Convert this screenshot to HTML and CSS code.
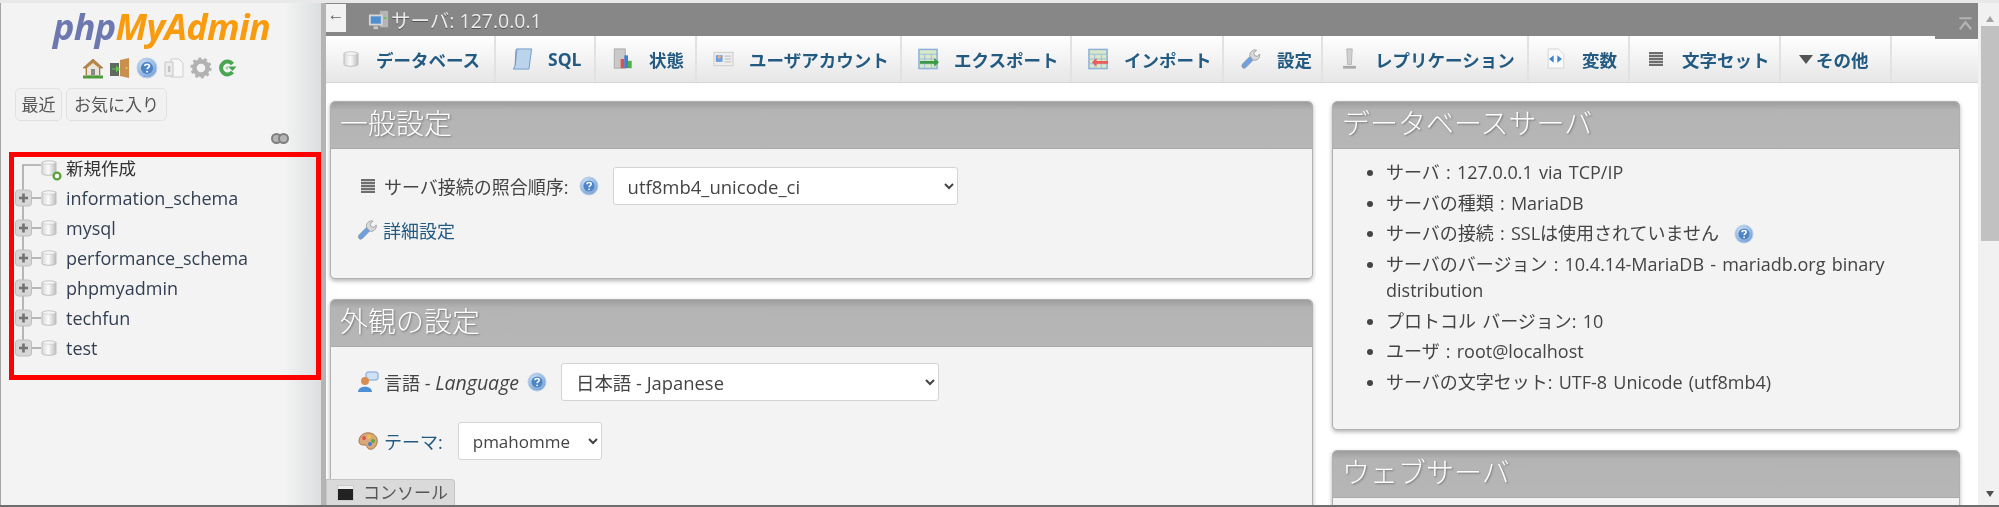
FILE: index.html
```html
<!DOCTYPE html>
<html lang="ja">
<head>
<meta charset="utf-8">
<title>phpMyAdmin</title>
<link rel="stylesheet" href="styles.css">
</head>
<body>
<svg class="defs" width="0" height="0" aria-hidden="true">
  <defs>
    <linearGradient id="dbg" x1="0" x2="1" y1="0" y2="0"><stop offset="0" stop-color="#d8d8d8"/><stop offset=".45" stop-color="#fbfbfb"/><stop offset="1" stop-color="#bdbdbd"/></linearGradient>
    <radialGradient id="hg" cx=".4" cy=".35" r=".75"><stop offset="0" stop-color="#dbe8f7"/><stop offset=".6" stop-color="#97b9e2"/><stop offset="1" stop-color="#6b97cf"/></radialGradient>
    <symbol id="db" viewBox="0 0 16 18"><path d="M1 3.5C1 1.6 15 1.6 15 3.5V14.5C15 16.8 1 16.8 1 14.5Z" fill="url(#dbg)" stroke="#bdbdbd"/><ellipse cx="8" cy="3.6" rx="6.4" ry="1.7" fill="#f4f4f4" stroke="#c8c8c8" stroke-width=".6"/></symbol>
    <symbol id="help" viewBox="0 0 20 20"><circle cx="10" cy="10" r="9" fill="url(#hg)" stroke="#b7cde8"/><circle cx="10" cy="10" r="5.6" fill="#4d84c6"/><path d="M8 8.2C8 6 12.2 6 12.2 8.2C12.2 9.6 10.1 9.6 10.1 11.2" fill="none" stroke="#fff" stroke-width="1.5"/><circle cx="10.1" cy="13.3" r=".9" fill="#fff"/></symbol>
    <symbol id="wrench" viewBox="0 0 22 24"><path d="M2.5 21.5C.8 19.8 1.5 18 3 16.5L10.5 9C9.8 5 13 1.5 17.5 2.3L14.5 5.5L15.5 8.5L18.5 9.2L21 6.5C21.6 11 18 14 14 13.2L6.3 21C5 22.4 3.6 22.6 2.5 21.5Z" fill="#6f9fdc" stroke="#8f8f8f" stroke-width=".6"/><path d="M10.5 9C9.8 5 13 1.5 17.5 2.3L14.5 5.5L15.5 8.5L18.5 9.2L21 6.5C21.6 11 18 14 14 13.2Z" fill="#d9d9d9" stroke="#a0a0a0" stroke-width=".7"/></symbol>
    <symbol id="lines" viewBox="0 0 16 16"><rect x="1" y="1" width="14" height="14" fill="#6e6e6e"/><path d="M1 3.5H15M1 6.5H15M1 9.5H15M1 12.5H15" stroke="#cfcfcf"/></symbol>
    <symbol id="node" viewBox="0 0 44 30"><path d="M8 0V30" stroke="#a6a6a6" stroke-width="1.6"/><path d="M16 15H26" stroke="#a6a6a6" stroke-width="1.6"/><rect x=".5" y="7" width="16" height="16" rx="3" fill="#d6d6d6" stroke="#bebebe"/><path d="M4 15H13M8.5 10.5V19.5" stroke="#727272" stroke-width="2.6"/></symbol>
    <symbol id="nodeend" viewBox="0 0 44 30"><path d="M8 0V15" stroke="#a6a6a6" stroke-width="1.6"/><path d="M16 15H26" stroke="#a6a6a6" stroke-width="1.6"/><rect x=".5" y="7" width="16" height="16" rx="3" fill="#d6d6d6" stroke="#bebebe"/><path d="M4 15H13M8.5 10.5V19.5" stroke="#727272" stroke-width="2.6"/></symbol>
  </defs>
</svg>

<div class="app">
  <aside class="nav">
    <div class="logo"><span class="logo-php">php</span><span class="logo-my">MyAdmin</span></div>
    <div class="quick">
      <svg class="qi" viewBox="0 0 22 22"><path d="M11 2L1 11H4V18H18V11H21Z" fill="#b98645" stroke="#8e6530" stroke-width=".6"/><path d="M5 11L11 6L17 11V18H5Z" fill="#e9e4da"/><rect x="9" y="12" width="4" height="6" fill="#8a8a8a"/><path d="M1 20H21" stroke="#4f9a3c" stroke-width="3"/></svg>
      <svg class="qi" viewBox="0 0 22 22"><rect x="1" y="6" width="9" height="13" fill="#5e6a60"/><path d="M11 3L20 1V21L11 19Z" fill="#c98f4e"/><path d="M2 12H6V9L10 12.5L6 16V13H2Z" fill="#63c14b" transform="translate(1 -.5)"/><circle cx="17.5" cy="11" r="1" fill="#f0d060"/></svg>
      <svg class="qi" viewBox="0 0 20 20"><use href="#help"/></svg>
      <svg class="qi" viewBox="0 0 22 22"><path d="M8 2H16L20 6V20H8Z" fill="#f7f7f7" stroke="#cfcfcf"/><path d="M2 5H10V19H2Z" fill="#ececec" stroke="#c6c6c6"/><rect x="5" y="9" width="2.4" height="6" fill="#c4c4c4"/></svg>
      <svg class="qi" viewBox="0 0 22 22"><circle cx="11" cy="11" r="6.6" fill="none" stroke="#b2b2b2" stroke-width="4.6"/><circle cx="11" cy="11" r="9.4" fill="none" stroke="#b2b2b2" stroke-width="2.4" stroke-dasharray="3 2.9"/></svg>
      <svg class="qi" viewBox="0 0 22 22"><path d="M15.5 7A6.4 6.4 0 1 0 15.5 15" fill="none" stroke="#4aa552" stroke-width="4"/><path d="M11 9.5H19.5L15.5 14Z" fill="#4aa552"/><circle cx="10" cy="11" r="1.4" fill="#9bd0a0"/></svg>
    </div>
    <div class="recent">
      <span class="pill pill-a">最近</span>
      <span class="pill pill-b">お気に入り</span>
    </div>
    <div class="linkrow">
      <svg class="link" viewBox="0 0 18 11"><rect x="1" y="1" width="9" height="9" rx="4.5" fill="#b5b5b5" stroke="#808080" stroke-width="2"/><rect x="8" y="1" width="9" height="9" rx="4.5" fill="#b5b5b5" stroke="#808080" stroke-width="2"/></svg>
    </div>
    <div class="tree">
      <div class="row row-first">
        <svg class="branch" viewBox="0 0 44 30"><path d="M8 30V12H26" fill="none" stroke="#a6a6a6" stroke-width="1.6"/></svg>
        <span class="dbwrap"><svg class="dbi"><use href="#db"/></svg><svg class="newdot" viewBox="0 0 10 10"><circle cx="5" cy="5" r="3.4" fill="#fff" stroke="#5fa23f" stroke-width="2.4"/></svg></span>
        <span class="tname tnew">新規作成</span>
      </div>
      <div class="row"><svg class="branch"><use href="#node"/></svg><svg class="dbi"><use href="#db"/></svg><span class="tname">information_schema</span></div>
      <div class="row"><svg class="branch"><use href="#node"/></svg><svg class="dbi"><use href="#db"/></svg><span class="tname">mysql</span></div>
      <div class="row"><svg class="branch"><use href="#node"/></svg><svg class="dbi"><use href="#db"/></svg><span class="tname">performance_schema</span></div>
      <div class="row"><svg class="branch"><use href="#node"/></svg><svg class="dbi"><use href="#db"/></svg><span class="tname">phpmyadmin</span></div>
      <div class="row"><svg class="branch"><use href="#node"/></svg><svg class="dbi"><use href="#db"/></svg><span class="tname">techfun</span></div>
      <div class="row"><svg class="branch"><use href="#nodeend"/></svg><svg class="dbi"><use href="#db"/></svg><span class="tname">test</span></div>
    </div>
  </aside>

  <div class="resizer"></div>

  <main class="main">
    <header class="topbar">
      <span class="back">←</span>
      <svg class="srv" viewBox="0 0 24 24"><rect x="13" y="2" width="9" height="18" fill="#b5b5b5"/><rect x="1" y="6" width="15" height="12" fill="#d6d6d6"/><rect x="3" y="8" width="11" height="8" fill="#4d8fd0"/><rect x="6" y="19" width="5" height="3" fill="#c8c8c8"/><rect x="17" y="9" width="3" height="2" fill="#66c455"/></svg>
      <span class="crumb">サーバ: 127.0.0.1</span>
      <svg class="collapse" viewBox="0 0 16 16"><path d="M1 1.5H15M1.5 14L8 6L14.5 14" fill="none" stroke="#b4b4b4" stroke-width="2.4"/></svg>
    </header>

    <nav class="tabs">
      <a class="tab t1"><svg class="ti ti-db"><use href="#db"/></svg>データベース</a>
      <a class="tab t2"><svg class="ti" viewBox="0 0 22 24"><path d="M5 1H21L18 23H1L3 19Z" fill="#bcd3ec" stroke="#6d97c7"/><path d="M5 1C4 1 3.5 2.5 3.5 6L3 19" fill="none" stroke="#6d97c7"/></svg>SQL</a>
      <a class="tab t3"><svg class="ti" viewBox="0 0 22 24"><rect x="2" y="1" width="12" height="21" fill="#c9c9c9" stroke="#aaa"/><rect x="9" y="12" width="4" height="10" fill="#d9534f"/><rect x="13" y="8" width="4" height="14" fill="#3f7fd0"/><rect x="17" y="14" width="4" height="8" fill="#4fae45"/></svg>状態</a>
      <a class="tab t4"><svg class="ti" viewBox="0 0 22 16"><rect x="1" y="1" width="20" height="14" fill="#eee" stroke="#ccc"/><rect x="3" y="4" width="7" height="7" fill="#6a9fdc"/><circle cx="6.5" cy="6" r="1.8" fill="#e9b08b"/><path d="M12 5H19M12 8H19M12 11H19" stroke="#bbb"/></svg>ユーザアカウント</a>
      <a class="tab t5"><svg class="ti" viewBox="0 0 22 22"><rect x="1" y="1" width="19" height="20" fill="#d8e8c8" stroke="#8fb0d8" stroke-width="1.6"/><path d="M1 6H20M7 6V21M14 6V21M1 11H20M1 16H20" stroke="#9cbddc"/><path d="M2 13H17V10L22 14.5L17 19V16H2Z" fill="#3b9a45"/></svg>エクスポート</a>
      <a class="tab t6"><svg class="ti" viewBox="0 0 22 22"><rect x="1" y="1" width="19" height="20" fill="#d8e8c8" stroke="#8fb0d8" stroke-width="1.6"/><path d="M1 6H20M7 6V21M14 6V21M1 11H20M1 16H20" stroke="#9cbddc"/><path d="M21 13H9V10L4 14.5L9 19V16H21Z" fill="#ee5a55"/></svg>インポート</a>
      <a class="tab t7"><svg class="ti"><use href="#wrench"/></svg>設定</a>
      <a class="tab t8"><svg class="ti" viewBox="0 0 22 24"><path d="M8 1H14L13 18H9Z" fill="#d0d0d0" stroke="#b5b5b5"/><path d="M4 21H18" stroke="#a8a8a8" stroke-width="3"/></svg>レプリケーション</a>
      <a class="tab t9"><svg class="ti" viewBox="0 0 20 24"><path d="M2 1H13L19 7V22H2Z" fill="#fafafa" stroke="#d2d2d2"/><path d="M8 8L3 12L8 16ZM12 8L17 12L12 16Z" fill="#3a83d6"/></svg>変数</a>
      <a class="tab t10"><svg class="ti ti-lines"><use href="#lines"/></svg>文字セット</a>
      <a class="tab t11"><svg class="tri" viewBox="0 0 14 9"><path d="M0 0H14L7 9Z" fill="#555"/></svg>その他</a>
    </nav>
    <div class="tabcap"></div>

    <div class="content">
      <div class="col col-left">
        <section class="panel p-general">
          <h2 class="phead">一般設定</h2>
          <div class="form-row fr-coll">
            <svg class="i16"><use href="#lines"/></svg>
            <span class="lbl">サーバ接続の照合順序:</span>
            <svg class="i20"><use href="#help"/></svg>
            <select class="sel sel-coll"><option>utf8mb4_unicode_ci</option></select>
          </div>
          <div class="form-row fr-adv">
            <svg class="i22"><use href="#wrench"/></svg>
            <span class="link-t">詳細設定</span>
          </div>
        </section>
        <section class="panel p-look">
          <h2 class="phead">外観の設定</h2>
          <div class="form-row fr-lang">
            <svg class="i22" viewBox="0 0 22 22"><rect x="9" y="1" width="12" height="8" rx="2" fill="#cfe2f5" stroke="#77a3d6"/><circle cx="8" cy="10" r="4" fill="#d98f54"/><path d="M1 21C1 14 15 14 15 21Z" fill="#4d8fd6"/></svg>
            <span class="lbl">言語 - <em>Language</em></span>
            <svg class="i20"><use href="#help"/></svg>
            <select class="sel sel-lang"><option>日本語 - Japanese</option></select>
          </div>
          <div class="form-row fr-theme">
            <svg class="i22" viewBox="0 0 22 22"><path d="M2 11C2 5 8 2 13 3C19 4 21 9 20 13C19 18 15 20 12 19C9 18 11 15 8 15C5 15 2 15 2 11Z" fill="#d8a878" stroke="#a9794b"/><circle cx="7" cy="8" r="1.9" fill="#d9534f"/><circle cx="12" cy="7" r="1.9" fill="#e8c64a"/><circle cx="16" cy="11" r="1.9" fill="#4fae45"/><circle cx="13" cy="14" r="1.9" fill="#3f7fd0"/></svg>
            <span class="link-t">テーマ:</span>
            <select class="sel sel-theme"><option>pmahomme</option></select>
          </div>
        </section>
      </div>
      <div class="col col-right">
        <section class="panel p-db">
          <h2 class="phead">データベースサーバ</h2>
          <ul class="info">
            <li>サーバ : 127.0.0.1 via TCP/IP</li>
            <li>サーバの種類 : MariaDB</li>
            <li>サーバの接続 : SSLは使用されていません <svg class="i18"><use href="#help"/></svg></li>
            <li>サーバのバージョン : 10.4.14-MariaDB - mariadb.org binary distribution</li>
            <li>プロトコル バージョン: 10</li>
            <li>ユーザ : root@localhost</li>
            <li>サーバの文字セット: UTF-8 Unicode (utf8mb4)</li>
          </ul>
        </section>
        <section class="panel p-web">
          <h2 class="phead">ウェブサーバ</h2>
        </section>
      </div>
    </div>

    <div class="console">
      <span class="console-i"></span>
      <span class="console-t">コンソール</span>
    </div>
  </main>

  <div class="scrollbar">
    <span class="arrow-up"></span>
    <span class="thumb"></span>
    <span class="track"></span>
    <span class="arrow-down"></span>
  </div>
</div>
<div class="bottomline"></div>
</body>
</html>
```

FILE: styles.css
```css
* { box-sizing: border-box; }
html, body { margin: 0; height: 507px; overflow: hidden; background: #fff; }
body {
  font-family: "Open Sans", "Noto Sans CJK JP", sans-serif;
  font-size: 18px;
  color: #444;
  filter: blur(.4px);
}
.defs { position: absolute; }
.app { display: flex; height: 505px; padding-top: 3px; background: linear-gradient(#e8e8e8 0 3px, #fff 3px); }

/* sidebar */
.nav {
  width: 321px;
  border-left: 1px solid #a5a5a5;
  background: linear-gradient(90deg, #f3f3f3 0, #f3f3f3 283px, #dcdfe0 320px);
  display: flex;
  flex-direction: column;
  flex: none;
}
.logo {
  font-family: "Open Sans", sans-serif;
  font-style: italic;
  font-weight: 700;
  font-size: 36px;
  line-height: 42px;
  letter-spacing: -.7px;
  margin: 3px 0 0 52px;
  height: 44px;
  white-space: nowrap;
}
.logo-php { color: #6c78af; }
.logo-my { color: #f89c0e; }
.quick { display: flex; gap: 5px; margin: 7px 0 0 81px; height: 22px; }
.qi { width: 22px; height: 22px; }
.recent { display: flex; gap: 4px; margin: 9px 0 0 14px; }
.pill {
  height: 33px;
  padding-bottom: 3px;
  border: 1px solid #e1e1e1;
  border-radius: 5px;
  background: #f1f1f1;
  display: flex;
  align-items: center;
  justify-content: center;
  font-size: 17px;
  color: #555;
}
.pill-a { width: 47px; }
.pill-b { width: 101px; }
.linkrow { display: flex; justify-content: flex-end; padding-right: 32px; margin-top: 12px; height: 19px; }
.link { width: 18px; height: 11px; }
.tree {
  margin: 0 0 0 8px;
  width: 312px;
  height: 228px;
  border: 5px solid #f00;
}
.row { display: flex; align-items: center; height: 30px; }
.row-first { margin-top: -4px; }
.branch { width: 44px; height: 30px; flex: none; margin-left: 1px; margin-right: -18px; }
.dbi { width: 16px; height: 18px; flex: none; }
.dbwrap { display: flex; position: relative; width: 16px; height: 18px; flex: none; }
.newdot { position: absolute; right: -5px; bottom: -4px; width: 10px; height: 10px; }
.tname {
  margin-left: 9px;
  font-size: 18px;
  color: #333f52;
  white-space: nowrap;
  line-height: 30px;
}
.tnew { color: #333; font-size: 17.5px; }

.resizer { width: 5px; flex: none; background: #b4b4b4; }

/* main */
.main { flex: 1; min-width: 0; position: relative; display: flex; flex-direction: column; }
.topbar {
  height: 33px;
  background: #878787;
  display: flex;
  align-items: center;
  flex: none;
}
.back {
  width: 20px;
  height: 28px;
  margin: -4px 0 0 0;
  background: #f2f2f2;
  color: #666;
  font-size: 17px;
  line-height: 22px;
  text-align: center;
  font-family: "Liberation Sans", sans-serif;
}
.srv { width: 22px; height: 22px; margin-left: 22px; }
.crumb { color: #ececec; font-size: 19.5px; line-height: 26px; margin: 2px 0 0 1px; text-shadow: 0 1px 0 #555; }
.collapse { width: 15px; height: 14px; margin-left: auto; margin-right: 5px; margin-top: 9px; }

.tabs {
  display: flex;
  height: 47px;
  flex: none;
  background: linear-gradient(#fff, #e6e6e6);
  border-bottom: 1px solid #d6d6d6;
}
.tabcap { position: absolute; top: 33px; right: 0; width: 43px; height: 3px; background: #878787; }
.tab {
  display: flex;
  align-items: center;
  height: 100%;
  border-right: 2px solid #e2e2e2;
  font-weight: 700;
  font-size: 17.5px;
  color: #235a81;
  white-space: nowrap;
  background: linear-gradient(#fff, #e6e6e6);
}
.ti { width: 21px; height: 22px; flex: none; }
.ti-db { width: 16px; height: 18px; }
.ti-lines { width: 16px; height: 16px; }
.tri { width: 14px; height: 9px; flex: none; margin-right: 3px; }
.t1 { width: 170px; padding-left: 17px; gap: 17px; }
.t2 { width: 100px; padding-left: 16px; gap: 15px; }
.t3 { width: 101px; padding-left: 16px; gap: 16px; }
.t4 { width: 205px; padding-left: 16px; gap: 15px; }
.t5 { width: 170px; padding-left: 16px; gap: 15px; }
.t6 { width: 152px; padding-left: 16px; gap: 15px; }
.t7 { width: 99px; padding-left: 16px; gap: 16px; }
.t8 { width: 206px; padding-left: 16px; gap: 15px; }
.t9 { width: 101px; padding-left: 16px; gap: 16px; }
.t10 { width: 151px; padding-left: 18px; gap: 18px; }
.t11 { width: 111px; padding-left: 18px; gap: 0; }

.content { display: flex; flex: 1; min-height: 0; overflow: hidden; padding: 18px 0 0 4px; gap: 19px; background: #fff; }
.col { display: flex; flex-direction: column; gap: 20px; flex: none; }
.col-left { width: 983px; }
.col-right { width: 628px; }
.panel {
  background: #f3f3f3;
  border: 1px solid #b0b0b0;
  border-radius: 5px;
  box-shadow: 0 2px 4px rgba(0,0,0,.3);
  flex: none;
}
.p-general { height: 178px; }
.p-look { height: 240px; }
.p-db { height: 329px; }
.p-web { height: 200px; }
.phead {
  margin: 0;
  height: 47px;
  background: linear-gradient(#9c9c9c, #b4b4b4 8px, #b6b6b6);
  border-bottom: 1px solid #a9a9a9;
  border-radius: 4px 4px 0 0;
  color: #fff;
  font-weight: 300;
  font-size: 28px;
  line-height: 43px;
  padding-left: 9px;
  text-shadow: 1px 1px 2px #777;
}
.form-row { display: flex; align-items: center; }
.fr-coll { height: 38px; margin: 18px 0 0 29px; }
.fr-adv { margin: 12px 0 0 25px; height: 26px; }
.fr-lang { height: 38px; margin: 16px 0 0 26px; }
.fr-theme { height: 38px; margin: 21px 0 0 26px; }
.i16 { width: 16px; height: 16px; flex: none; margin-right: 8px; }
.i20 { width: 20px; height: 20px; flex: none; margin: 0 14px 0 10px; }
.i22 { width: 22px; height: 22px; flex: none; margin-right: 5px; }
.i18 { width: 20px; height: 20px; vertical-align: -4px; margin-left: 9px; }
.fr-lang .i20 { margin: 0 14px 0 8px; }
.lbl { color: #444; white-space: nowrap; }
.lbl em { font-style: italic; font-size: 19.5px; }
.link-t { color: #235a81; white-space: nowrap; }
.fr-theme .link-t { margin-right: 15px; }
.sel {
  height: 38px;
  font: inherit;
  color: #444;
  background: #fff;
  border: 1px solid #d4d4d4;
  border-radius: 3px;
  padding: 0 5px 0 10px;
  flex: none;
}
.sel-coll { width: 345px; font-size: 18.5px; }
.sel-lang { width: 378px; font-size: 18.4px; }
.sel-theme { width: 144px; font-size: 17px; }
.info { margin: 10px 0 0; padding: 0 30px 0 53px; list-style: disc; font-size: 18px; line-height: 26px; word-spacing: 1.5px; color: #444; }
.info li { margin-bottom: 4.7px; }

.console {
  position: absolute;
  left: 0;
  top: 476px;
  width: 129px;
  height: 26px;
  background: #dadada;
  border: 1px solid #c4c4c4;
  border-bottom: 0;
  border-radius: 0 4px 0 0;
  display: flex;
  align-items: center;
  padding-left: 10px;
  gap: 9px;
}
.console-i { width: 17px; height: 16px; background: linear-gradient(#eee 0 3px, #222 3px); border: 1px solid #ccc; }
.console-t { font-size: 17px; color: #555; line-height: 1; }

.scrollbar {
  width: 21px;
  flex: none;
  background: #f1f1f1;
  display: flex;
  flex-direction: column;
  align-items: center;
  padding-left: 3px;
}
.arrow-up { margin-top: 12px; height: 11px; width: 18px; position: relative; }
.arrow-up::before { content: ""; display: block; margin: 1px auto 0; width: 0; border: 4.5px solid transparent; border-top: 0; border-bottom: 6px solid #a3a3a3; }
.thumb { width: 18px; height: 215px; background: #c1c1c1; }
.track { flex: 1; }
.arrow-down { height: 14px; }
.arrow-down::before { content: ""; display: block; width: 0; border: 4.5px solid transparent; border-bottom: 0; border-top: 6px solid #505050; }
.bottomline { height: 2px; background: #6e6e6e; }
```
